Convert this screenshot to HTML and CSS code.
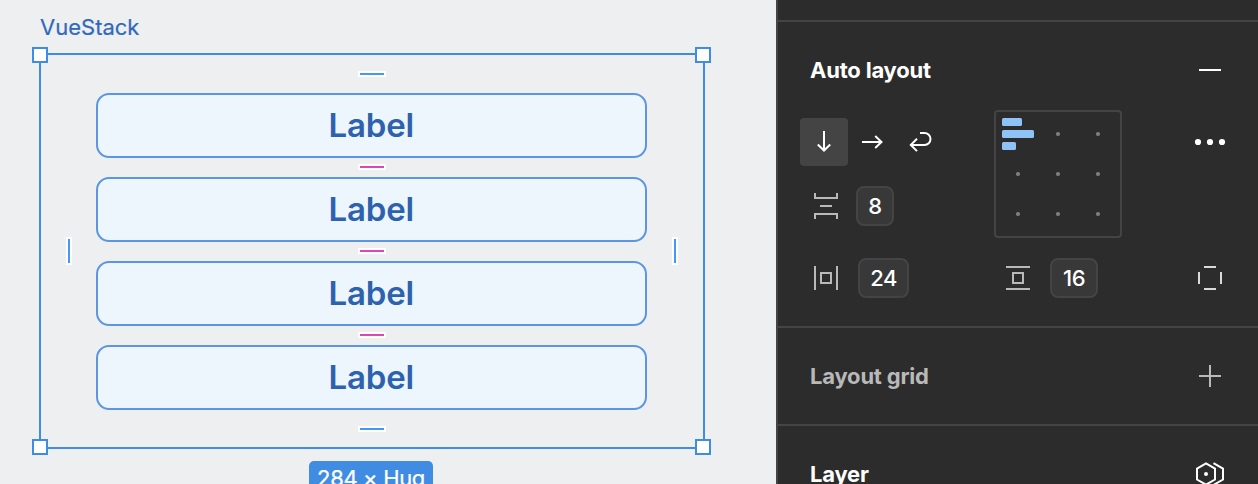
FILE: index.html
```html
<!DOCTYPE html>
<html lang="en">
<head>
<meta charset="utf-8">
<title>Auto layout</title>
<link rel="stylesheet" href="styles.css">
</head>
<body>
<div class="app">
  <main class="canvas">
    <div class="frame-name">VueStack</div>
    <div class="frame">
      <div class="stack">
        <div class="item"><span>Label</span></div>
        <div class="item"><span>Label</span></div>
        <div class="item"><span>Label</span></div>
        <div class="item"><span>Label</span></div>
      </div>
      <i class="handle tl"></i><i class="handle tr"></i><i class="handle bl"></i><i class="handle br"></i>
      <i class="tick top"></i><i class="tick bottom"></i>
      <i class="tick gap gap1"></i><i class="tick gap gap2"></i><i class="tick gap gap3"></i>
      <i class="tick side left"></i><i class="tick side right"></i>
    </div>
    <div class="size"><span>284 × Hug</span></div>
  </main>
  <aside class="panel">
    <div class="strip"></div>
    <section class="section auto">
      <header class="head">
        <h2 class="t-auto">Auto layout</h2>
        <svg class="icon" width="28" height="28"><path d="M3 14h22" stroke="#fff" stroke-width="2"/></svg>
      </header>
      <div class="controls">
        <div class="left-col">
          <div class="dirs">
            <button class="dir on"><svg width="48" height="48"><path d="M24 13v19.500M17.800 26.500l6.200 6 6.200-6"/></svg></button>
            <button class="dir"><svg width="48" height="48"><path d="M14 24h19.500M27.200 18l6.300 6-6.300 6"/></svg></button>
            <button class="dir"><svg width="48" height="48"><path d="M24 15h4.500a6 6 0 0 1 0 12H15M21 20.700l-6.200 6.200 6.200 6.200"/></svg></button>
          </div>
          <div class="field gap-field">
            <svg class="icon" width="24" height="26"><path d="M1 0v5h22V0M6 13h12M1 26v-5h22v5"/></svg>
            <div class="value v8">8</div>
          </div>
        </div>
        <div class="align">
          <svg width="128" height="128">
            <rect x="1" y="1" width="126" height="126" rx="3" fill="none" stroke="#444" stroke-width="2"/>
            <g fill="#8ec3f7"><rect x="8" y="8" width="20" height="8" rx="1.500"/><rect x="8" y="20" width="32" height="8" rx="1.500"/><rect x="8" y="32" width="14" height="8" rx="1.500"/></g>
            <g fill="#808080"><circle cx="64" cy="24" r="2.100"/><circle cx="104" cy="24" r="2.100"/><circle cx="24" cy="64" r="2.100"/><circle cx="64" cy="64" r="2.100"/><circle cx="104" cy="64" r="2.100"/><circle cx="24" cy="104" r="2.100"/><circle cx="64" cy="104" r="2.100"/><circle cx="104" cy="104" r="2.100"/></g>
          </svg>
        </div>
        <svg class="more" width="32" height="12" fill="#fff"><circle cx="4" cy="6" r="3.100"/><circle cx="16" cy="6" r="3.100"/><circle cx="28" cy="6" r="3.100"/></svg>
      </div>
      <div class="padding">
        <div class="field pad-h">
          <svg class="icon" width="24" height="24"><path d="M1 0v24M23 0v24M7 7h10v10H7z"/></svg>
          <div class="value v24">24</div>
        </div>
        <div class="field pad-v">
          <svg class="icon" width="24" height="24"><path d="M0 1h24M0 23h24M7 7h10v10H7z"/></svg>
          <div class="value v16">16</div>
        </div>
        <svg class="icon sides" width="24" height="24"><path d="M6 1h12M6 23h12M1 6v12M23 6v12"/></svg>
      </div>
    </section>
    <section class="section grid">
      <header class="head">
        <h2 class="t-grid">Layout grid</h2>
        <svg class="icon" width="28" height="28"><path d="M3 14h22M14 3v22"/></svg>
      </header>
    </section>
    <section class="section layer">
      <header class="head">
        <h2 class="t-layer">Layer</h2>
        <svg class="hex" width="28" height="28"><path d="M1 8.700 10 3.500l9 5.200v10.800l-9 5.200-9-5.200zM17.500 3.200 27 8.700v10.800l-9.500 5.500"/><circle cx="10" cy="14.100" r="2"/></svg>
      </header>
    </section>
  </aside>
</div>
</body>
</html>
```
FILE: styles.css
```css
* { box-sizing: border-box; }
body { margin: 0; overflow: hidden; font-family: Inter, "Liberation Sans", sans-serif; }
.app { display: flex; width: 1258px; height: 484px; overflow: hidden; }
.canvas { width: 776px; height: 484px; background: #eeeff1; overflow: hidden; display: flex; flex-direction: column; align-items: flex-start; }
.frame-name { flex: none; height: 53px; padding: 13px 0 0 40px; font-size: 22px; line-height: 28px; color: #3069bc; -webkit-text-stroke: 0.200px #3069bc; }
.frame { position: relative; flex: none; margin-left: 38.500px; width: 666.500px; height: 396px; border: 2px solid #3f8ce5; padding: 37.500px 56px 0 55px; }
.stack { display: flex; flex-direction: column; gap: 19px; }
.item { height: 65px; border: 2px solid #5c96e2; border-radius: 13px; background: #edf5fd; display: flex; align-items: center; justify-content: center; font-size: 33px; font-weight: 600; letter-spacing: -0.200px; line-height: 40px; color: #2d62ae; }
.handle { position: absolute; width: 16px; height: 16px; border: 2px solid #3f8ce5; background: #fff; }
.tl { left: -8.500px; top: -8px; } .tr { right: -8px; top: -8px; }
.bl { left: -8.500px; bottom: -8px; } .br { right: -8px; bottom: -8px; }
.tick { position: absolute; width: 28px; height: 6px; left: 317.500px; background: #4597f8; border: 2px solid #fff; }
.top { top: 16px; } .bottom { top: 371px; }
.gap { background: #dd48b4; }
.gap1 { top: 109px; } .gap2 { top: 193px; } .gap3 { top: 277px; }
.side { width: 6px; height: 28px; top: 182px; }
.left { left: 25px; } .right { left: 631.500px; }
.size { flex: none; width: 124px; height: 40px; margin: 12px 0 0 309px; border-radius: 5px; background: #3f8ce2; color: #fff; font-size: 22px; letter-spacing: -0.350px; line-height: 35px; text-align: center; -webkit-text-stroke: 0.250px #fff; }

.panel { width: 482px; height: 484px; border-left: 2px solid #444; background: #2c2c2c; color: #fff; overflow: hidden; }
.strip { height: 20px; }
.section { border-top: 2px solid #444; padding: 34px 32px 0; }
.head { display: flex; justify-content: space-between; align-items: center; height: 28px; margin-right: 2px; }
h2 { margin: 0; font-size: 22px; line-height: 28px; font-weight: 700; letter-spacing: -0.200px; white-space: nowrap; }
.icon { display: block; fill: none; stroke: #b9b9b9; stroke-width: 2; }
.auto { height: 306px; }
.grid { height: 98px; }
.t-grid { color: #b9b9b9; }
.controls { display: flex; align-items: flex-start; margin: 26px 0 0 -10px; height: 128px; }
.left-col { width: 194px; padding-top: 8px; }
.dirs { display: flex; }
.dir { width: 48px; height: 48px; padding: 0; border: 0; border-radius: 4px; background: none; }
.dir.on { background: #444; }
.dir svg { display: block; fill: none; stroke: #fff; stroke-width: 2; }
.field { display: flex; align-items: center; }
.gap-field { margin: 20px 0 0 14px; gap: 18px; }
.value { height: 40px; border: 2px solid #444; border-radius: 8px; background: #383838; font-size: 22px; font-weight: 500; letter-spacing: -0.500px; line-height: 36px; text-align: center; }
.v8 { width: 38px; } .v24 { width: 51px; } .v16 { width: 48px; }
.align { width: 128px; height: 128px; }
.align svg { display: block; }
.more { margin: 26px 0 0 72px; }
.padding { display: flex; align-items: center; margin: 20px 2px 0 4px; }
.pad-h { width: 192px; gap: 20px; }
.pad-v { gap: 20px; }
.sides { margin: 0 2px 0 auto; stroke: #dadada; }
.hex { display: block; fill: none; stroke: #fff; stroke-width: 2; }
.hex circle { fill: #fff; stroke: none; }
```
